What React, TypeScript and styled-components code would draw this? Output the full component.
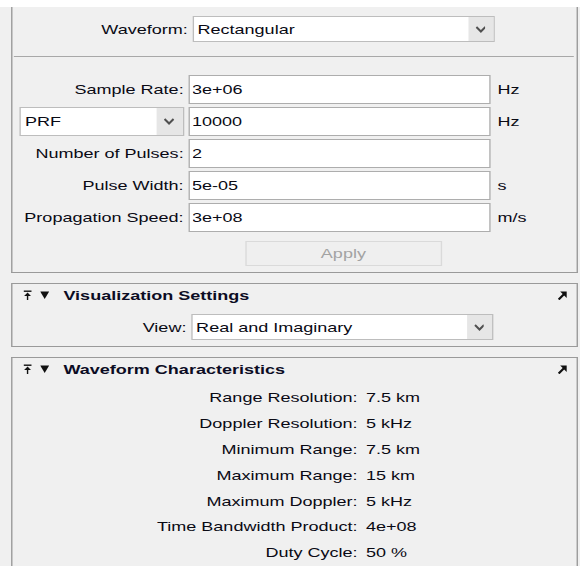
import React from "react";
import styled, { createGlobalStyle } from "styled-components";

// The dialog is drawn at a narrow logical width and stretched sideways.
const STRETCH = 1.386;
const px = (w: number) => `${(w / STRETCH).toFixed(2)}px`;

const GlobalStyle = createGlobalStyle`
  html, body {
    margin: 0;
    padding: 0;
    overflow: hidden;
    background: #f0f0f0;
  }
  body {
    font-family: "Liberation Sans", Arial, sans-serif;
    font-size: 13px;
    color: #0a0a14;
  }
`;

const Stage = styled.div`
  width: 418.5px;
  height: 566px;
  overflow: hidden;
  display: flex;
  flex-direction: column;
  transform: scaleX(${STRETCH});
  transform-origin: 0 0;
  background: #f0f0f0;
`;

const TopCap = styled.div`
  height: 7px;
  flex: none;
  background: #ffffff;
`;

// $cut: the panel runs off the top edge, $open: it runs off the bottom edge
const Panel = styled.section<{ $cut?: boolean; $open?: boolean }>`
  flex: ${(p) => (p.$open ? 1 : "none")};
  margin: ${(p) => (p.$cut ? 0 : 10)}px 2px 0 8px;
  border: 1px solid #9a9a9a;
  border-top-width: ${(p) => (p.$cut ? 0 : 1)}px;
  border-bottom-width: ${(p) => (p.$open ? 0 : 1)}px;
  background: #f0f0f0;
`;

const Body = styled.div<{ $top: number; $bottom: number }>`
  padding: ${(p) => p.$top}px 0 ${(p) => p.$bottom}px;
`;

const Header = styled.div`
  height: 22px;
  display: flex;
  align-items: center;
  padding: 0 6px 0 8px;
  font-weight: bold;
  color: #0c0c24;
`;

const HeaderTitle = styled.span`
  flex: 1;
  margin-left: 10px;
  white-space: nowrap;
`;

const IconSlot = styled.span<{ $gap?: number }>`
  display: inline-flex;
  margin-left: ${(p) => p.$gap ?? 0}px;
`;

const ChoiceRow = styled.div<{ $label: number }>`
  display: grid;
  grid-template-columns: ${(p) => p.$label}px 218px;
  column-gap: 3px;
  align-items: center;
  height: 26px;
`;

const Label = styled.span`
  text-align: right;
  white-space: nowrap;
`;

const Dropdown = styled.div<{ $height: number }>`
  display: flex;
  align-items: stretch;
  height: ${(p) => p.$height}px;
  box-sizing: border-box;
  border: 1px solid #bdbdbd;
  background: #ffffff;
`;

const DropValue = styled.span`
  flex: 1;
  display: flex;
  align-items: center;
  padding-left: 3px;
  white-space: nowrap;
  overflow: hidden;
`;

const DropButton = styled.span<{ $width: number }>`
  width: ${(p) => p.$width}px;
  display: flex;
  align-items: center;
  justify-content: center;
  background: #e6e6e6;
`;

const Divider = styled.div`
  height: 1px;
  margin: 14px 2px 0 0.5px;
  background: #a8a8a8;
`;

const FormGrid = styled.div`
  margin-top: 18px;
  padding-left: 5px;
  display: grid;
  grid-template-columns: 118.5px 218.5px auto;
  grid-auto-rows: 29px;
  column-gap: 3px;
  row-gap: 3px;
  align-items: center;
`;

const Field = styled.input`
  height: 100%;
  width: 100%;
  box-sizing: border-box;
  margin: 0;
  border: 1px solid #adadad;
  background: #ffffff;
  padding: 0 0 0 2px;
  font: 13px "Liberation Sans", Arial, sans-serif;
  color: #0a0a14;
  outline: none;
`;

const Unit = styled.span`
  margin-left: 2px;
  white-space: nowrap;
`;

const ApplyRow = styled.div`
  margin-top: 9px;
  padding-left: 5px;
  display: grid;
  grid-template-columns: 118.5px 218.5px;
  column-gap: 3px;
`;

const ApplyButton = styled.button`
  grid-column: 2;
  justify-self: center;
  margin-left: 6px;
  width: 142px;
  height: 25px;
  box-sizing: border-box;
  border: 1px solid #dadada;
  background: #efefef;
  color: #a3a3a3;
  font: 13px "Liberation Sans", Arial, sans-serif;
  padding: 0;
`;

const StatsGrid = styled.dl`
  margin: 0;
  padding: 5px 0 0;
  display: grid;
  grid-template-columns: 249px auto;
  grid-auto-rows: 25.8px;
  column-gap: 6px;
  align-items: center;
`;

const StatLabel = styled.dt`
  margin: 0;
  text-align: right;
  white-space: nowrap;
`;

const StatValue = styled.dd`
  margin: 0;
  white-space: nowrap;
`;

const Chevron = () => (
  <svg width={px(11)} height="7" viewBox="0 0 11 7" preserveAspectRatio="none">
    <polyline points="1,1 5.5,5.5 10,1" fill="none" stroke="#505050" strokeWidth="2" />
  </svg>
);

const PinIcon = () => (
  <svg width={px(8)} height="10" viewBox="0 0 8 10" preserveAspectRatio="none">
    <rect x="0" y="0.5" width="8" height="1.4" fill="#111" />
    <polygon points="4,2.6 0.6,6 7.4,6" fill="#111" />
    <rect x="3.3" y="5.5" width="1.4" height="4.5" fill="#111" />
  </svg>
);

const CollapseIcon = () => (
  <svg width={px(9)} height="8" viewBox="0 0 9 8" preserveAspectRatio="none">
    <polygon points="0,0.5 9,0.5 4.5,8" fill="#111" />
  </svg>
);

const UndockIcon = () => (
  <svg width={px(10)} height="9" viewBox="0 0 10 9" preserveAspectRatio="none">
    <polygon points="3,0.5 9.5,0.5 9.5,7" fill="#111" />
    <line x1="7" y1="3" x2="1.5" y2="8.5" stroke="#111" strokeWidth="2.2" />
  </svg>
);

interface SelectProps {
  value: string;
  height: number;
  buttonWidth: number;
}

const Select = ({ value, height, buttonWidth }: SelectProps) => (
  <Dropdown $height={height}>
    <DropValue>{value}</DropValue>
    <DropButton $width={buttonWidth}>
      <Chevron />
    </DropButton>
  </Dropdown>
);

interface SectionHeaderProps {
  title: string;
}

const SectionHeader = ({ title }: SectionHeaderProps) => (
  <Header>
    <IconSlot>
      <PinIcon />
    </IconSlot>
    <IconSlot $gap={6.5}>
      <CollapseIcon />
    </IconSlot>
    <HeaderTitle>{title}</HeaderTitle>
    <IconSlot>
      <UndockIcon />
    </IconSlot>
  </Header>
);

const fields = [
  { label: "Sample Rate:", value: "3e+06", unit: "Hz" },
  { label: "PRF", value: "10000", unit: "Hz", choice: true },
  { label: "Number of Pulses:", value: "2", unit: "" },
  { label: "Pulse Width:", value: "5e-05", unit: "s" },
  { label: "Propagation Speed:", value: "3e+08", unit: "m/s" },
];

const characteristics = [
  ["Range Resolution:", "7.5 km"],
  ["Doppler Resolution:", "5 kHz"],
  ["Minimum Range:", "7.5 km"],
  ["Maximum Range:", "15 km"],
  ["Maximum Doppler:", "5 kHz"],
  ["Time Bandwidth Product:", "4e+08"],
  ["Duty Cycle:", "50 %"],
];

const App = () => (
  <>
    <GlobalStyle />
    <Stage>
      <TopCap />
      <Panel $cut>
        <Body $top={9} $bottom={6}>
          <ChoiceRow $label={126.5}>
            <Label>Waveform:</Label>
            <Select value="Rectangular" height={26} buttonWidth={18} />
          </ChoiceRow>
          <Divider />
          <FormGrid>
            {fields.map((f) => (
              <React.Fragment key={f.label}>
                {f.choice ? (
                  <Select value={f.label} height={29} buttonWidth={19} />
                ) : (
                  <Label>{f.label}</Label>
                )}
                <Field readOnly value={f.value} />
                <Unit>{f.unit}</Unit>
              </React.Fragment>
            ))}
          </FormGrid>
          <ApplyRow>
            <ApplyButton disabled>Apply</ApplyButton>
          </ApplyRow>
        </Body>
      </Panel>
      <Panel>
        <SectionHeader title="Visualization Settings" />
        <Body $top={8} $bottom={6}>
          <ChoiceRow $label={125.5}>
            <Label>View:</Label>
            <Select value="Real and Imaginary" height={26} buttonWidth={18} />
          </ChoiceRow>
        </Body>
      </Panel>
      <Panel $open>
        <SectionHeader title="Waveform Characteristics" />
        <StatsGrid>
          {characteristics.map(([label, value]) => (
            <React.Fragment key={label}>
              <StatLabel>{label}</StatLabel>
              <StatValue>{value}</StatValue>
            </React.Fragment>
          ))}
        </StatsGrid>
      </Panel>
    </Stage>
  </>
);

export default App;
